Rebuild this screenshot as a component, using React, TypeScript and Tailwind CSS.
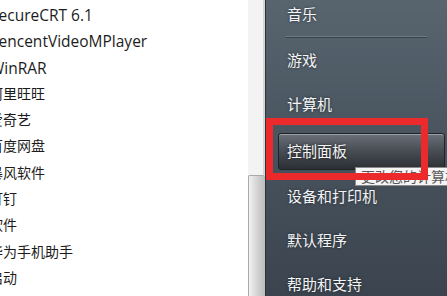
import * as React from "react";

const programs = [
  "SecureCRT 6.1",
  "TencentVideoMPlayer",
  "WinRAR",
  "阿里旺旺",
  "爱奇艺",
  "百度网盘",
  "暴风软件",
  "钉钉",
  "软件",
  "华为手机助手",
  "启动",
];

const cjk = { fontFamily: '"Segoe UI", "Open Sans", "Noto Sans CJK SC", sans-serif' };

function MenuItem({ label }: { label: string }) {
  return (
    <div className="h-[44px] flex items-center pl-[21px] text-[15px] text-[#f2f4f6] [text-shadow:0_0_3px_rgba(0,0,0,0.55)]">
      {label}
    </div>
  );
}

export default function App() {
  return (
    <div className="relative w-[447px] h-[296px] flex overflow-hidden bg-white" style={cjk}>
      {/* Program list */}
      <div className="w-[248px] overflow-hidden bg-white">
        <div className="ml-[-11px] pt-[2px]">
          {programs.map((p) => (
            <div
              key={p}
              className={`h-[26.3px] leading-[26.3px] text-[#1c1c1c] whitespace-nowrap ${
                /^[A-Za-z]/.test(p) ? "text-[15.5px] ml-[1px]" : "text-[14px]"
              }`}
            >
              {p}
            </div>
          ))}
        </div>
      </div>

      {/* Scrollbar */}
      <div className="w-[17px] flex flex-col">
        <div className="h-[175px] bg-[#f3f3f3] border-r-2 border-[#d6d6d6]" />
        <div className="flex-1 rounded-t-[2px] border-l border-t border-[#a9a9a9] bg-gradient-to-r from-[#f2f2f2] via-[#d4d4d4] to-[#bdbdbd]" />
      </div>

      {/* Start menu right column */}
      <div className="flex-1 border-l border-[#2c343c] bg-gradient-to-b from-[#58656f] via-[#48535e] to-[#3b444e]">
        <div className="mt-[-8px] flex flex-col">
          <MenuItem label="音乐" />
          <div className="mx-[20px] h-[2px] border-t border-[#6e7a85] border-b border-b-[#39424b]" />
          <MenuItem label="游戏" />
          <MenuItem label="计算机" />
          <div className="h-[48px] pt-[7px] pb-[4px] pl-[12px] pr-[2px]">
            <div className="h-full flex items-center pl-[8px] rounded-[3px] border border-[#1e2328] shadow-[inset_0_1px_0_rgba(255,255,255,0.35)] bg-gradient-to-b from-[#6a7078] via-[#474c53] to-[#2c3035] text-[15px] text-[#f4f4f4] [text-shadow:0_0_3px_rgba(0,0,0,0.7)]">
              控制面板
            </div>
          </div>
          <MenuItem label="设备和打印机" />
          <MenuItem label="默认程序" />
          <MenuItem label="帮助和支持" />
        </div>
      </div>

      {/* Tooltip */}
      <div className="absolute left-[355px] top-[167px] h-[19px] w-[120px] flex items-center pl-[5px] bg-[#f5f5f5] border border-[#8a8a8a] text-[14px] text-[#5a5a5a] whitespace-nowrap">
        更改您的计算机设置
      </div>

      {/* Red highlight */}
      <div className="absolute left-[266px] top-[118px] w-[162px] h-[62px] border-[7px] border-[#ec2a2c]" />
    </div>
  );
}
